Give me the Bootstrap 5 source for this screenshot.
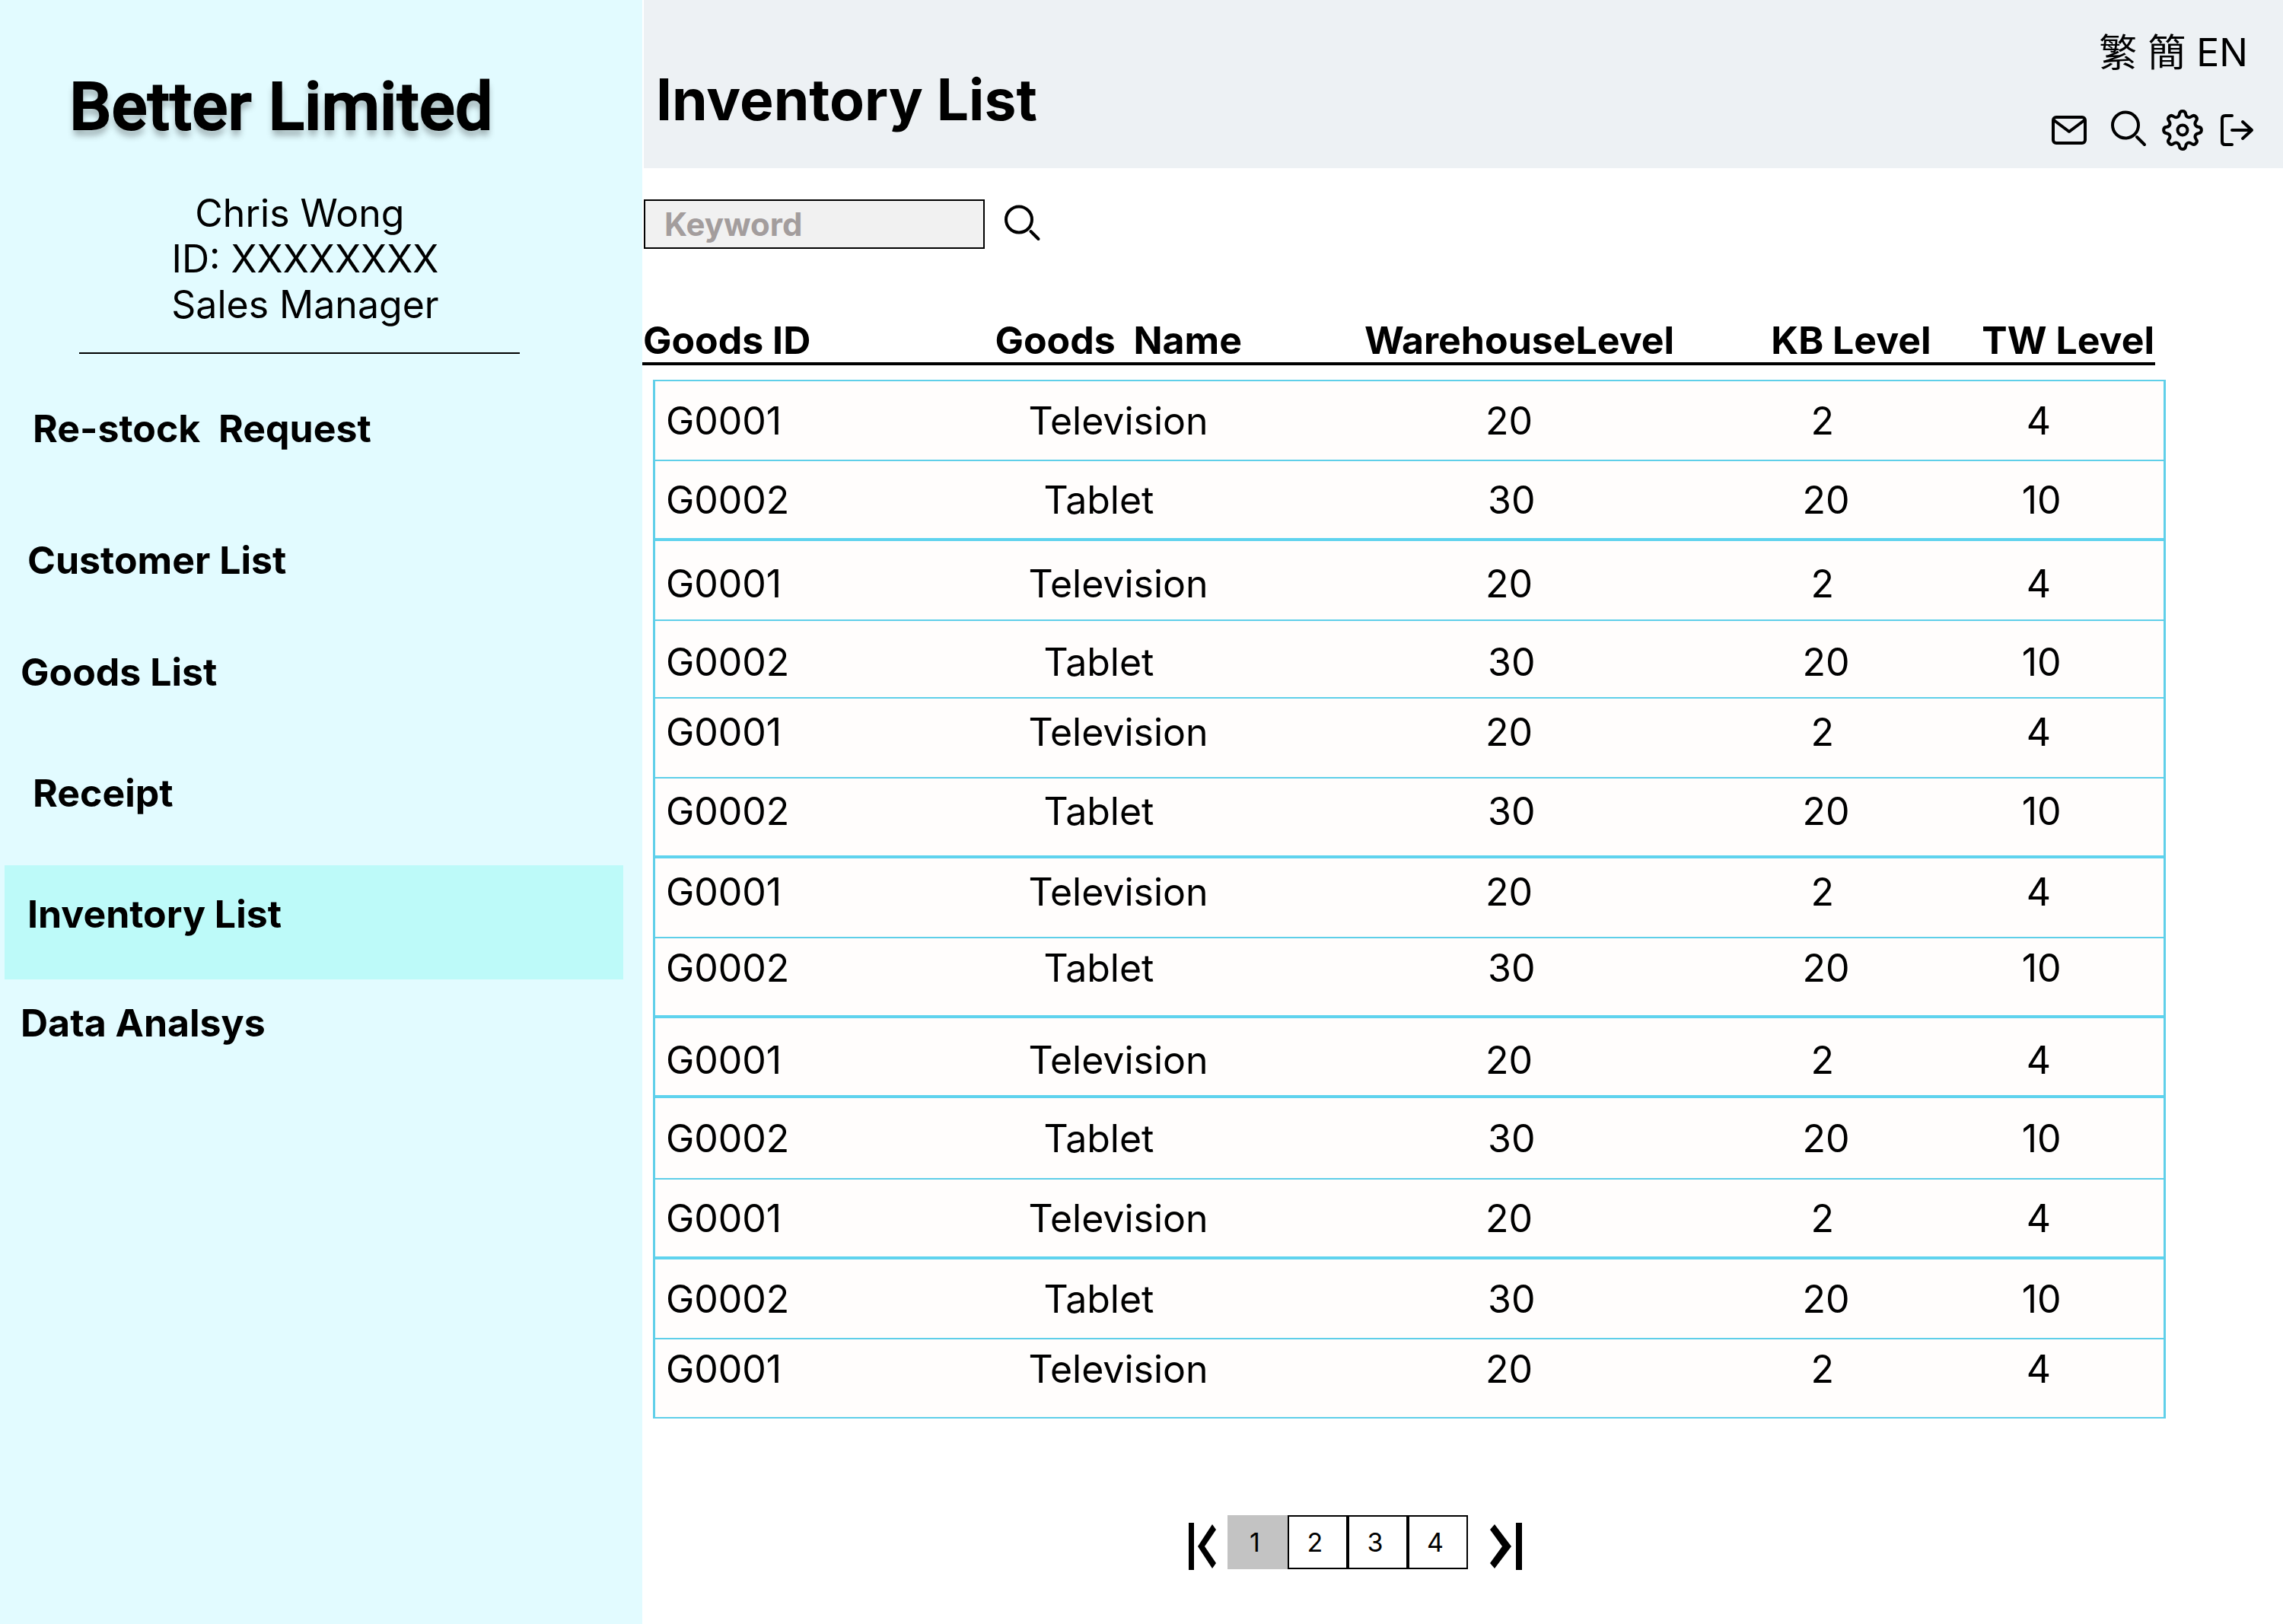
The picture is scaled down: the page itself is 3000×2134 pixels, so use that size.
<!DOCTYPE html>
<html lang="en">
<head>
<meta charset="utf-8">
<meta name="viewport" content="width=device-width, initial-scale=1">
<title>Inventory List - Better Limited</title>
<link rel="stylesheet" href="https://cdn.jsdelivr.net/npm/bootstrap@5.3.0/dist/css/bootstrap.min.css">
<style>
  body {
    font-family: Inter, "Noto Sans CJK TC", sans-serif;
    font-size: 50px;
    line-height: 60px;
    color: #000;
    background: #fff;
  }
  a { color: inherit; text-decoration: none; }

  /* Sidebar */
  .side-panel { flex: 0 0 28.13%; background: #e2fbff; padding-top: 88px; }
  .brand {
    font-family: Roboto, sans-serif;
    font-size: 88px;
    font-weight: 500;
    line-height: 104px;
    padding-left: 91px;
    -webkit-text-stroke: 2px #000;
    text-shadow: 0 8px 8px rgba(0, 0, 0, .3);
  }
  .profile { padding-top: 58px; margin: 0 42px 0 0; white-space: pre; }
  .side-rule { border-top: 2px solid #000; opacity: 1; margin: 33px 161px 34px 104px; }
  .side-nav { padding-right: 25px; padding-left: 6px; }
  .side-nav a { display: block; padding-top: 34px; font-weight: 700; white-space: pre; }
  .side-nav li:nth-child(3n+1) a { padding-left: 37px; }
  .side-nav li:nth-child(3n+2) a { padding-left: 30px; }
  .side-nav li:nth-child(3n) a { padding-left: 21px; }
  .slot-l { height: 173px; }
  .slot-m { height: 159px; }
  .slot-s { height: 147px; }
  .side-nav a.active { height: 150px; background: #bdfaf9; }
  .side-nav li:last-child a { padding-top: 27px; }

  /* Top bar */
  .top-bar { height: 221px; background: #edf1f4; margin-left: 2px; padding: 39px 34px 0 16px; }
  .page-title { font-size: 75px; line-height: 90px; font-weight: 700; margin-top: 47px; }
  .lang-links { margin-right: 12px; gap: 14px; }
  .tool-row { padding-top: 45px; }
  .tool-btn { border: 0; background: none; padding: 0; display: block; line-height: 0; }
  svg { display: block; fill: none; stroke: #000; stroke-width: 4; stroke-linecap: round; stroke-linejoin: round; }

  /* Search */
  .search-form { padding: 41px 0 0 2px; gap: 22px; }
  .search-box {
    width: 448px; height: 65px;
    border: 2px solid #000; border-radius: 0;
    background: #f1f1f1;
    font-size: 42px; font-weight: 700;
    padding: 0 25px;
  }
  .search-box::placeholder { color: #a39d9d; opacity: 1; }

  /* Stock table */
  .stock { display: block; margin: 91px 154px 0 0; }
  .stock thead, .stock tbody { display: block; }
  .stock tr { display: grid; grid-template-columns: 464fr 487fr 536fr 278fr 223fr; align-items: center; }
  .stock thead { margin-right: 14px; border-bottom: 4px solid #000; }
  .stock th { white-space: pre; line-height: 56px; }
  .stock tbody { margin: 19px 0 0 14px; background: #fffdfc; border: solid #5fcfe9; border-width: 2px 3px; }
  .stock tbody tr { height: 105px; border-bottom: 2px solid #5fcfe9; }
  .stock tbody tr.group-end { border-bottom: 4px solid #5fd3ee; }
  .stock tbody tr.row-short { height: 102px; }
  .stock tbody tr.row-tall { height: 107px; }
  .stock tbody tr:last-child { border-bottom: 0; }
  .stock tbody tr.sit-low { padding-top: 8px; }
  .stock tbody tr.sit-high { padding-bottom: 15px; }
  .stock tbody tr.sit-top { padding-bottom: 24px; }
  .stock td { padding-left: 14px; }
  .stock td:nth-child(2) { padding-left: 28px; }
  .stock td:nth-child(3) { padding-left: 143px; }
  .stock td:nth-child(4) { padding-left: 36px; }
  .stock td:nth-child(5) { padding-left: 42px; }
  .stock tr:nth-child(even) td:nth-child(2) { padding-left: 48px; }
  .stock tr:nth-child(even) td:nth-child(3) { padding-left: 146px; }
  .stock tr:nth-child(even) td:nth-child(4) { padding-left: 25px; }
  .stock tr:nth-child(even) td:nth-child(5) { padding-left: 36px; }

  /* Pager */
  .pager { margin: 127px 0 62px 718px; }
  .pager a.page-no {
    width: 79px; height: 71px;
    border: 2px solid #000;
    font-size: 34px; line-height: 67px;
    text-align: center; padding-right: 7px;
  }
  .pager a.page-no.active { background: #c3c3c3; border-color: #c3c3c3; }
  .pager svg { fill: #000; stroke: none; }
  .pager .first-page { margin: 10px 14px 0 0; }
  .pager .last-page { margin: 10px 0 0 29px; }
</style>
</head>
<body>
<div class="d-flex min-vh-100">

  <aside class="side-panel">
    <div class="brand">Better Limited</div>
    <p class="profile text-center">Chris Wong&nbsp;
ID: XXXXXXXX
Sales Manager</p>
    <hr class="side-rule">
    <ul class="side-nav list-unstyled mb-0">
      <li><a class="slot-l" href="#">Re-stock  Request</a></li>
      <li><a class="slot-s" href="#">Customer List</a></li>
      <li><a class="slot-m" href="#">Goods List</a></li>
      <li><a class="slot-m" href="#">Receipt</a></li>
      <li><a class="active" href="#" aria-current="page">Inventory List</a></li>
      <li><a class="slot-m" href="#">Data Analsys</a></li>
    </ul>
  </aside>

  <main class="flex-grow-1">
    <header class="top-bar d-flex justify-content-between align-items-start">
      <h1 class="page-title mb-0">Inventory List</h1>
      <div class="d-flex flex-column align-items-end">
        <div class="lang-links d-flex">
          <a href="#" lang="zh-Hant">繁</a>
          <a href="#" lang="zh-Hant">簡</a>
          <a href="#">EN</a>
        </div>
        <div class="tool-row d-flex">
          <button class="tool-btn" type="button" aria-label="Mail">
            <svg width="66" height="54" viewBox="2690 145 66 54"><rect x="2698" y="155" width="42" height="34" rx="4"/><path d="M2699 159l20 15 20-15"/></svg>
          </button>
          <button class="tool-btn" type="button" aria-label="Search">
            <svg width="82" height="54" viewBox="2758 145 82 54"><circle cx="2795" cy="165.500" r="17"/><path d="M2810 181l10 10"/></svg>
          </button>
          <button class="tool-btn" type="button" aria-label="Settings">
            <svg width="68" height="54" viewBox="2840 145 68 54"><circle cx="2870" cy="172" r="6.500"/><path d="M2865.800 152.900c.600-5.200 7.800-5.200 8.400 0 .5 4.200 4.300 5.700 7.600 3.100 4.100-3.200 9.200 1.900 5.900 6-2.600 3.300-1 7.300 3.200 7.800 5.300.500 5.300 7.700 0 8.400-4.200.5-5.700 4.300-3.200 7.600 3.300 4.100-1.800 9.200-5.900 5.900-3.300-2.600-7.100-1-7.600 3.200-.6 5.300-7.800 5.300-8.400 0-.5-4.200-4.300-5.700-7.600-3.200-4.100 3.300-9.200-1.800-6-5.900 2.600-3.300 1.100-7.100-3.100-7.600-5.300-.7-5.300-7.900 0-8.400 4.200-.5 5.700-4.500 3.100-7.800-3.200-4.100 1.900-9.200 6-6 3.300 2.600 7.100 1.100 7.600-3.100z" transform="translate(0 -2)"/></svg>
          </button>
          <button class="tool-btn" type="button" aria-label="Log out">
            <svg width="60" height="54" viewBox="2908 145 60 54"><path d="M2935 153h-9q-4 0-4 4v30q0 4 4 4h9M2935 172h26M2949 161l12 11-12 11"/></svg>
          </button>
        </div>
      </div>
    </header>

    <form class="search-form d-flex" role="search">
      <input class="search-box" type="text" placeholder="Keyword" aria-label="Keyword">
      <button class="tool-btn" type="submit" aria-label="Search">
        <svg width="56" height="60" viewBox="1317 264 56 60"><circle cx="1340" cy="287.500" r="17"/><path d="M1355.500 303l10 10"/></svg>
      </button>
    </form>

    <table class="stock">
      <thead>
        <tr><th>Goods ID</th><th>Goods  Name</th><th>WarehouseLevel</th><th>KB Level</th><th>TW Level</th></tr>
      </thead>
      <tbody>
        <tr><td>G0001</td><td>Television</td><td>20</td><td>2</td><td>4</td></tr>
        <tr class="group-end"><td>G0002</td><td>Tablet</td><td>30</td><td>20</td><td>10</td></tr>
        <tr class="sit-low"><td>G0001</td><td>Television</td><td>20</td><td>2</td><td>4</td></tr>
        <tr class="row-short sit-low"><td>G0002</td><td>Tablet</td><td>30</td><td>20</td><td>10</td></tr>
        <tr class="sit-high"><td>G0001</td><td>Television</td><td>20</td><td>2</td><td>4</td></tr>
        <tr class="group-end sit-high"><td>G0002</td><td>Tablet</td><td>30</td><td>20</td><td>10</td></tr>
        <tr class="sit-high"><td>G0001</td><td>Television</td><td>20</td><td>2</td><td>4</td></tr>
        <tr class="group-end sit-top"><td>G0002</td><td>Tablet</td><td>30</td><td>20</td><td>10</td></tr>
        <tr class="group-end sit-low"><td>G0001</td><td>Television</td><td>20</td><td>2</td><td>4</td></tr>
        <tr class="row-tall"><td>G0002</td><td>Tablet</td><td>30</td><td>20</td><td>10</td></tr>
        <tr class="group-end"><td>G0001</td><td>Television</td><td>20</td><td>2</td><td>4</td></tr>
        <tr><td>G0002</td><td>Tablet</td><td>30</td><td>20</td><td>10</td></tr>
        <tr class="row-short sit-top"><td>G0001</td><td>Television</td><td>20</td><td>2</td><td>4</td></tr>
      </tbody>
    </table>

    <nav class="pager d-flex" aria-label="Pages">
      <a class="first-page" href="#" aria-label="First page">
        <svg width="37" height="62" viewBox="0 0 37 62"><path d="M0 0h7v62H0zM12 31L31 2l5 7-15 22 15 22-5 7z"/></svg>
      </a>
      <a class="page-no active" href="#" aria-current="page">1</a>
      <a class="page-no" href="#">2</a>
      <a class="page-no" href="#">3</a>
      <a class="page-no" href="#">4</a>
      <a class="last-page" href="#" aria-label="Last page">
        <svg width="42" height="62" viewBox="0 0 42 62"><path d="M34 0h8v62h-8zM28 31L6 2 0 9l16 22L0 53l6 7z"/></svg>
      </a>
    </nav>
  </main>
</div>
<script src="https://cdn.jsdelivr.net/npm/bootstrap@5.3.0/dist/js/bootstrap.bundle.min.js"></script>
</body>
</html>
